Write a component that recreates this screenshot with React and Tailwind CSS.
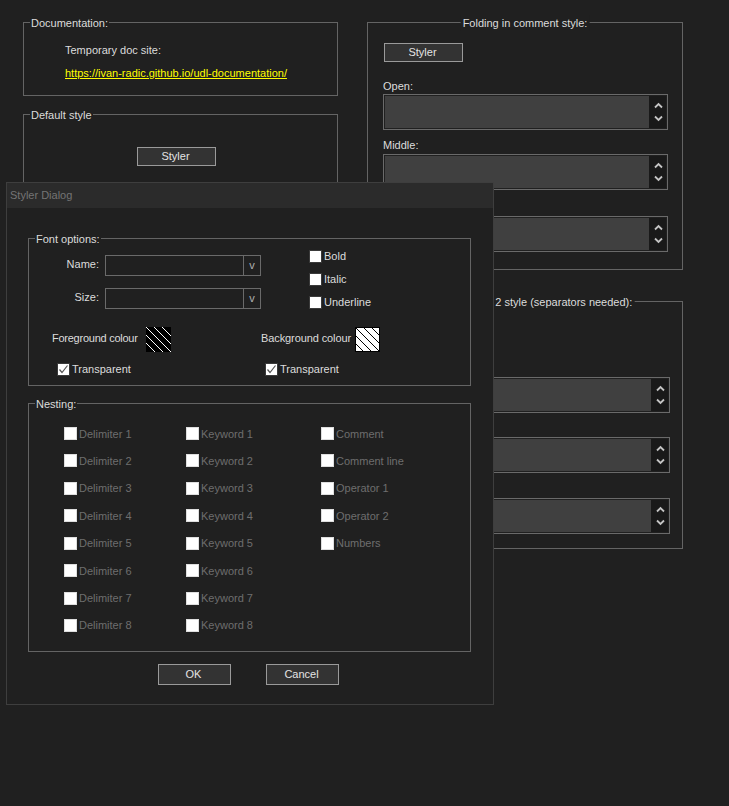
const FONT = "font-['Liberation_Sans',sans-serif]";

function Group({ title, center, className = "", children }) {
  return (
    <section className={`relative border border-[#646464] ${className}`}>
      <span className={`absolute -top-[8px] bg-[#202020] leading-[16px] whitespace-nowrap ${center ? "left-1/2 -translate-x-1/2 px-[2px]" : "left-[6px] px-[1px]"}`}>
        {title}
      </span>
      {children}
    </section>
  );
}

function Button({ children, className = "" }) {
  return (
    <button className={`flex items-center justify-center border border-[#9a9a9a] bg-[#333333] pr-[2px] text-[#e4e4e4] ${className}`}>
      {children}
    </button>
  );
}

function Chevron({ up }) {
  return (
    <svg width="9" height="7" viewBox="0 0 9 7" className="block">
      <path d={up ? "M1 5.5 L4.5 2 L8 5.5" : "M1 1.5 L4.5 5 L8 1.5"} fill="none" stroke="#c4c4c4" strokeWidth="1.8" />
    </svg>
  );
}

function Spinner({ className = "" }) {
  return (
    <div className={`flex h-[36px] border border-[#6a6a6a] bg-[#202020] p-[1px] ${className}`}>
      <div className="flex-1 bg-[#404040]" />
      <div className="flex w-[17px] flex-col items-center justify-between bg-[#191919] py-[6px] pl-[1px]">
        <Chevron up />
        <Chevron />
      </div>
    </div>
  );
}

function Check({ checked, label, disabled, className = "" }) {
  return (
    <label className={`flex h-[13px] items-center whitespace-nowrap ${disabled ? "text-[#6e6e6e]" : "text-[#dcdcdc]"} ${className}`}>
      <span className={`flex h-[13px] w-[13px] shrink-0 items-center justify-center border bg-white ${disabled ? "border-[#dedede]" : "border-[#3a3a3a]"}`}>
        {checked && (
          <svg width="11" height="11" viewBox="0 0 11 11">
            <path d="M1.5 5.5 L4 8.5 L9.5 1.5" fill="none" stroke="#555555" strokeWidth="1.2" />
          </svg>
        )}
      </span>
      <span className={`ml-[2px] leading-[13px] ${disabled ? "pt-[1px]" : ""}`}>{label}</span>
    </label>
  );
}

function Combo({ label }) {
  return (
    <div className="flex items-center">
      <span className="-mt-[2px] w-[70px] text-right text-[#dcdcdc]">{label}</span>
      <div className="ml-[6px] flex h-[21px] w-[156px] border border-[#6a6a6a]">
        <div className="flex-1" />
        <div className="flex w-[17px] items-center justify-center border-l border-[#6a6a6a] text-[#b0b0b0]">v</div>
      </div>
    </div>
  );
}

function Hatch({ dark }) {
  const bg = dark ? "#000000" : "#ffffff";
  const fg = dark ? "#ffffff" : "#000000";
  const lines = [-16, -8, 0, 8, 16];
  return (
    <svg width="25" height="25" viewBox="0 0 25 25" className="block shrink-0">
      <rect width="25" height="25" fill={bg} />
      <g stroke={fg} strokeWidth="1">
        {lines.map((o) => (
          <line key={o} x1={o} y1="0" x2={o + 25} y2="25" />
        ))}
      </g>
      {!dark && <rect x="0.5" y="0.5" width="24" height="24" fill="none" stroke="#000" />}
    </svg>
  );
}

const NEST = [
  ...[1, 2, 3, 4, 5, 6, 7, 8].map((n) => `Delimiter ${n}`),
  ...[1, 2, 3, 4, 5, 6, 7, 8].map((n) => `Keyword ${n}`),
  "Comment",
  "Comment line",
  "Operator 1",
  "Operator 2",
  "Numbers",
];

export default function App() {
  return (
    <div className={`relative h-[806px] w-[729px] overflow-hidden bg-[#202020] text-[11px] text-[#dcdcdc] ${FONT}`}>
      <div className="flex gap-[29px] pl-[23px] pt-[22px]">
        <div className="flex w-[315px] flex-col gap-[18px]">
          <Group title="Documentation:" className="h-[74px]">
            <div className="pl-[41px] pt-[19px] leading-[16px]">Temporary doc site:</div>
            <a className="ml-[41px] mt-[7px] block w-fit leading-[16px] text-[#ffff00] underline">
              https://ivan-radic.github.io/udl-documentation/
            </a>
          </Group>
          <Group title="Default style" className="h-[120px]">
            <Button className="ml-[113px] mt-[32px] h-[19px] w-[79px]">Styler</Button>
          </Group>
        </div>

        <div className="flex w-[316px] flex-col gap-[31px]">
          <Group title="Folding in comment style:" center className="h-[248px] pl-[15px] pr-[14px] pt-[20px]">
            <Button className="ml-[1px] h-[19px] w-[79px]">Styler</Button>
            <div className="mt-[17px] leading-[15px]">Open:</div>
            <Spinner />
            <div className="mt-[8px] leading-[15px]">Middle:</div>
            <Spinner className="mt-[1px]" />
            <Spinner className="mt-[26px]" />
          </Group>
          <Group title="Folding in code 2 style (separators needed):" center className="h-[248px] pl-[17px] pr-[12px] pt-[75px]">
            <Spinner />
            <Spinner className="mt-[24px]" />
            <Spinner className="mt-[25px]" />
          </Group>
        </div>
      </div>

      <div className="absolute left-[6px] top-[182px] h-[523px] w-[488px] border border-[#3e3e3e] bg-[#202020]">
        <div className="flex h-[25px] items-center bg-[#2b2b2b] pl-[3px] text-[#747474]">Styler Dialog</div>

        <div className="flex flex-col gap-[17px] pl-[21px] pt-[30px]">
          <Group title="Font options:" className="h-[148px] w-[443px]">
            <div className="flex pt-[11px]">
              <div className="flex w-[280px] flex-col gap-[12px] pt-[5px]">
                <Combo label="Name:" />
                <Combo label="Size:" />
              </div>
              <div className="flex flex-col gap-[10px]">
                <Check label="Bold" />
                <Check label="Italic" />
                <Check label="Underline" />
              </div>
            </div>
            <div className="mt-[18px] grid grid-cols-[209px_1fr] pl-[23px]">
              <div className="flex items-center">
                <span className="-mt-[3px] w-[94px] whitespace-nowrap tracking-[-0.25px]">Foreground colour</span>
                <Hatch dark />
              </div>
              <div className="flex items-center">
                <span className="-mt-[3px] w-[94px] whitespace-nowrap tracking-[-0.1px]">Background colour</span>
                <Hatch />
              </div>
              <Check checked label="Transparent" className="ml-[5px] mt-[11px]" />
              <Check checked label="Transparent" className="ml-[4px] mt-[11px]" />
            </div>
          </Group>

          <Group title="Nesting:" className="h-[249px] w-[443px]">
            <div className="grid grid-flow-col grid-cols-[122px_135px_1fr] grid-rows-[repeat(8,27.43px)] pl-[35px] pt-[23px]">
              {NEST.map((n) => (
                <Check key={n} disabled label={n} />
              ))}
            </div>
          </Group>

          <div className="-mt-[5px] flex gap-[35px] pl-[130px]">
            <Button className="h-[21px] w-[73px]">OK</Button>
            <Button className="h-[21px] w-[73px]">Cancel</Button>
          </div>
        </div>
      </div>
    </div>
  );
}
